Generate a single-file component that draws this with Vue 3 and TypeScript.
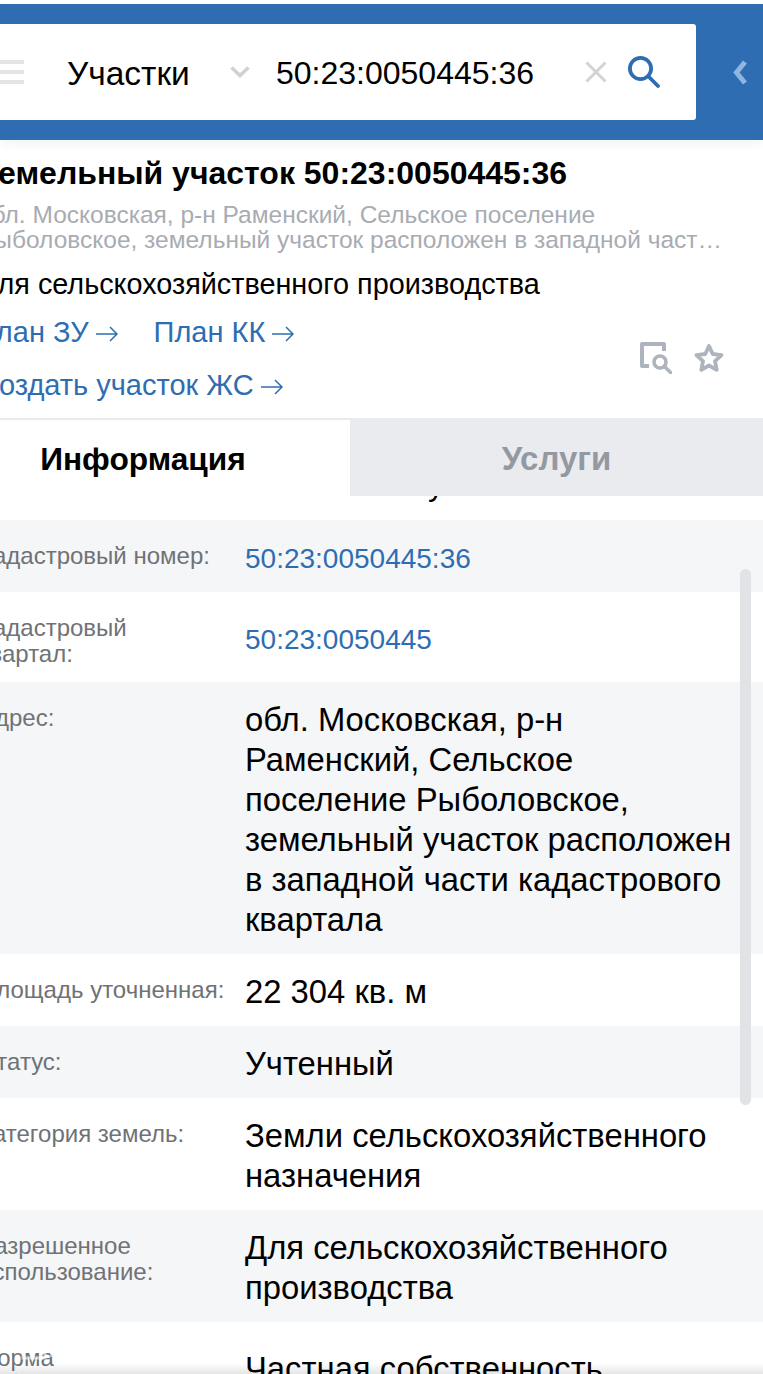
<script setup lang="ts">
interface InfoRow {
  label: string
  value: string
  link?: boolean
}

const rows: InfoRow[] = [
  { label: 'Кадастровый номер:', value: '50:23:0050445:36', link: true },
  { label: 'Кадастровый квартал:', value: '50:23:0050445', link: true },
  {
    label: 'Адрес:',
    value: 'обл. Московская, р-н Раменский, Сельское поселение Рыболовское, земельный участок расположен в западной части кадастрового квартала',
  },
  { label: 'Площадь уточненная:', value: '22 304 кв. м' },
  { label: 'Статус:', value: 'Учтенный' },
  { label: 'Категория земель:', value: 'Земли сельскохозяйственного назначения' },
  { label: 'Разрешенное использование:', value: 'Для сельскохозяйственного производства' },
  { label: 'Форма собственности:', value: 'Частная собственность' },
]
</script>

<template>
  <div class="page">
    <header class="topbar">
      <div class="search">
        <div class="burger"><i></i><i></i><i></i></div>
        <span class="kind">Участки</span>
        <svg class="chevron" width="20" height="12" viewBox="0 0 20 12">
          <path d="M1.500 1.500l8.500 8 8.500-8" fill="none" stroke="#cfd1d3" stroke-width="3.500" />
        </svg>
        <span class="query">50:23:0050445:36</span>
        <svg class="clear" width="22" height="22" viewBox="0 0 22 22">
          <path d="M1.500 1.500l19 19M20.500 1.500l-19 19" fill="none" stroke="#d2d2d2" stroke-width="3" />
        </svg>
        <svg class="lens" width="32" height="32" viewBox="0 0 32 32">
          <circle cx="12.500" cy="12.500" r="10.600" fill="none" stroke="#2f6db2" stroke-width="3.800" />
          <path d="M20.500 20.500l9.500 9.500" fill="none" stroke="#2f6db2" stroke-width="3.800" stroke-linecap="round" />
        </svg>
      </div>
      <svg class="collapse" width="14" height="25" viewBox="0 0 14 25">
        <path d="M12 2L3.500 12.500 12 23" fill="none" stroke="#8fb6e0" stroke-width="5" />
      </svg>
    </header>

    <section class="card">
      <h1>Земельный участок 50:23:0050445:36</h1>
      <p class="address">обл. Московская, р-н Раменский, Сельское поселение Рыболовское, земельный участок расположен в западной част…</p>
      <p class="purpose">Для сельскохозяйственного производства</p>
      <div class="actions">
        <div class="links">
          <div class="link-row">
            <a>План ЗУ<svg class="arrow" width="22" height="16" viewBox="0 0 22 16"><path d="M0 8h21M14 1l7 7-7 7" fill="none" stroke="#2f6db2" stroke-width="1.500" /></svg></a>
            <a>План КК<svg class="arrow" width="22" height="16" viewBox="0 0 22 16"><path d="M0 8h21M14 1l7 7-7 7" fill="none" stroke="#2f6db2" stroke-width="1.500" /></svg></a>
          </div>
          <div class="link-row">
            <a>Создать участок ЖС<svg class="arrow" width="22" height="16" viewBox="0 0 22 16"><path d="M0 8h21M14 1l7 7-7 7" fill="none" stroke="#2f6db2" stroke-width="1.500" /></svg></a>
          </div>
        </div>
        <div class="tools">
          <svg width="32" height="32" viewBox="0 0 32 32">
            <path d="M9 24H2V2h22v7" fill="none" stroke="#aeb4bd" stroke-width="4" stroke-linejoin="round" />
            <circle cx="20" cy="20" r="6" fill="none" stroke="#aeb4bd" stroke-width="3.600" />
            <path d="M25 25l5.500 5.500" fill="none" stroke="#aeb4bd" stroke-width="3.600" stroke-linecap="round" />
          </svg>
          <svg width="30" height="30" viewBox="0 0 30 30">
            <path d="M15 3l3.700 8 8.800 1.100-6.500 6 1.700 8.700-7.700-4.300-7.700 4.300 1.700-8.700-6.500-6 8.800-1.100z" fill="none" stroke="#aeb4bd" stroke-width="3.800" stroke-linejoin="round" />
          </svg>
        </div>
      </div>
    </section>

    <nav class="tabs">
      <div class="tab active">Информация</div>
      <div class="tab">Услуги</div>
    </nav>

    <div class="scroller">
      <div class="list">
        <div class="row first">
          <span class="label">Тип:</span>
          <span class="value">Земельный участок</span>
        </div>
        <div v-for="row in rows" :key="row.label" class="row">
          <span class="label">{{ row.label }}</span>
          <span class="value" :class="{ link: row.link }">{{ row.value }}</span>
        </div>
      </div>
      <div class="thumb"></div>
    </div>

    <div class="watermark">
      <svg width="26" height="26" viewBox="0 0 26 26">
        <path d="M2 12L13 3l11 9v12H2z" fill="none" stroke="rgba(255,255,255,.6)" stroke-width="3" />
      </svg>
      <span>Домклик</span>
    </div>
    <div class="fade"></div>
  </div>
</template>

<style scoped>
.page {
  position: relative;
  width: 763px;
  height: 1374px;
  overflow: hidden;
  background: #fff;
  color: #000;
  font-family: "Liberation Sans", Arial, sans-serif;
}

.topbar {
  display: flex;
  align-items: center;
  height: 136px;
  margin-top: 4px;
  background: #2f6db2;
  box-shadow: 0 4px 10px rgba(0, 0, 0, .05);
}

.search {
  display: flex;
  align-items: center;
  width: 696px;
  height: 96px;
  border-radius: 0 3px 3px 0;
  background: #fff;
  flex: none;
}

.burger {
  display: flex;
  flex-direction: column;
  gap: 6px;
  width: 24px;
}

.burger i {
  display: block;
  height: 4px;
  background: #e3e4e6;
}

.kind {
  width: 163px;
  margin-left: 43px;
  padding-top: 3px;
  font-size: 33.500px;
}

.query {
  width: 309px;
  margin-left: 26px;
  padding-top: 3px;
  font-size: 32px;
}

.clear {
  flex: none;
}

.lens {
  margin-left: 21px;
  flex: none;
}

.collapse {
  margin-left: 37px;
}

.card {
  height: 280px;
  margin-left: -22px;
  padding-top: 14px;
  box-sizing: border-box;
  border-bottom: 2px solid #e9ebef;
}

h1 {
  margin: 0;
  font-size: 32px;
  line-height: 38px;
  font-weight: 700;
  white-space: nowrap;
}

.address {
  width: 745px;
  margin: 10px 0 0;
  font-size: 24.500px;
  line-height: 25px;
  color: #a8acb2;
}

.purpose {
  margin: 15px 0 0;
  font-size: 28.800px;
  line-height: 34px;
}

.actions {
  display: flex;
  justify-content: space-between;
  width: 746px;
}

.link-row {
  display: flex;
  gap: 36px;
  height: 40px;
  margin-top: 13px;
  align-items: center;
  font-size: 29px;
  color: #2f6db2;
}

.link-row:first-child {
  margin: 11px 0 0 -3px;
}

.arrow {
  margin-left: 7px;
}

.tools {
  display: flex;
  align-items: center;
  gap: 22px;
  height: 32px;
  margin-top: 41px;
}

.tabs {
  position: relative;
  z-index: 1;
  display: grid;
  grid-template-columns: 350px 1fr;
  height: 76px;
}

.tab {
  display: flex;
  align-items: center;
  justify-content: center;
  padding-top: 2px;
  background: #e9ebef;
  color: #9499a1;
  font-size: 33px;
  font-weight: 700;
}

.tab.active {
  padding-right: 64px;
  background: #fff;
  color: #000;
  font-size: 31.700px;
}

.scroller {
  position: relative;
  height: 878px;
  overflow: hidden;
}

.list {
  margin-top: -48px;
}

.row {
  display: grid;
  grid-template-columns: 245px 1fr;
  min-height: 72px;
  padding: 16px 24px 16px 0;
  box-sizing: border-box;
}

.row.first {
  padding: 14px 24px 18px 0;
}

.row:nth-child(even) {
  background: #f5f6f8;
}

.label {
  margin: 7px 20px -1px -21px;
  font-size: 24px;
  line-height: 26px;
  color: #6f7276;
}

.value {
  align-self: center;
  padding-top: 2px;
  margin-bottom: -2px;
  font-size: 32.800px;
  line-height: 40px;
}

.value.link {
  padding-top: 3px;
  margin-bottom: -3px;
  color: #2f6db2;
  font-size: 28px;
}

.thumb {
  position: absolute;
  top: 73px;
  left: 740px;
  width: 11px;
  height: 536px;
  border-radius: 6px;
  background: #e1e3e6;
}

.watermark {
  position: absolute;
  left: 21px;
  top: 1334px;
  display: flex;
  align-items: center;
  gap: 3px;
  color: rgba(255, 255, 255, .6);
  font-size: 18px;
  font-weight: 700;
}

.fade {
  position: absolute;
  left: 0;
  right: 0;
  bottom: 0;
  height: 11px;
  background: linear-gradient(rgba(0, 0, 0, 0), rgba(0, 0, 0, .1));
}
</style>
